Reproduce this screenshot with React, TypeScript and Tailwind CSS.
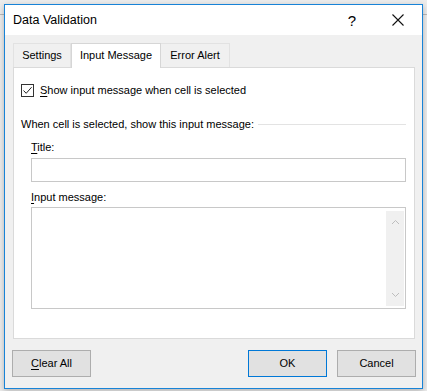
import React from "react";

const font = { fontFamily: '"Liberation Sans", Arial, sans-serif' };

function Chevron({ up }: { up?: boolean }) {
  return (
    <svg width="9" height="6" viewBox="0 0 9 6" className="block">
      <path
        d={up ? "M1 5 L4.5 1.5 L8 5" : "M1 1 L4.5 4.5 L8 1"}
        fill="none"
        stroke="#bdbdbd"
        strokeWidth="1"
      />
    </svg>
  );
}

export default function App() {
  return (
    <div className="relative w-[427px] h-[391px] bg-[#ececec] overflow-hidden" style={font}>
      <div className="absolute left-0 right-0 top-[14px] h-px bg-[#b9b9b9]" />
      <div className="relative z-10 ml-[4px] mt-[4px] w-[419px] h-[385px] border border-[#1883d7] bg-[#f0f0f0] flex flex-col shadow-[0_2px_6px_rgba(0,0,0,0.25)]">
        {/* Title bar */}
        <div className="h-[30px] bg-white flex items-center pl-[8px] text-black">
          <span className="text-[12.5px] leading-none">Data Validation</span>
          <span className="ml-auto mr-[36px] text-[15px] leading-none">?</span>
          <svg width="12" height="12" viewBox="0 0 12 12" className="mr-[18px]">
            <path d="M0.5 0.5 L11.5 11.5 M11.5 0.5 L0.5 11.5" stroke="#111" strokeWidth="1.1" />
          </svg>
        </div>

        {/* Tabs */}
        <div className="ml-[8px] mt-[8px] flex h-[24px] text-[11px] text-black">
          <div className="w-[58px] h-[24px] border border-b-0 border-[#e2e2e2] bg-[#f0f0f0] flex items-center justify-center">
            Settings
          </div>
          <div className="relative z-10 w-[90px] h-[25px] border border-b-0 border-[#d6d6d6] bg-white flex items-center justify-center pb-[1px]">
            Input Message
          </div>
          <div className="w-[69px] h-[24px] border border-b-0 border-l-0 border-[#e2e2e2] bg-[#f0f0f0] flex items-center justify-center">
            Error Alert
          </div>
        </div>

        {/* Panel */}
        <div className="ml-[8px] w-[402px] h-[272px] border border-[#dadada] bg-white flex flex-col text-[11px] text-black">
          <div className="mt-[16px] ml-[7px] flex items-center h-[13px]">
            <div className="w-[13px] h-[13px] border border-[#333] bg-white flex items-center justify-center">
              <svg width="11" height="11" viewBox="0 0 11 11">
                <path d="M1.5 5.5 L4.2 8.3 L9.6 2.2" fill="none" stroke="#222" strokeWidth="1" />
              </svg>
            </div>
            <span className="ml-[6px] leading-[13px]">
              <span className="underline underline-offset-2">S</span>how input message when cell is selected
            </span>
          </div>

          <div className="mt-[20px] ml-[7px] mr-[8px] flex items-center h-[14px]">
            <span className="leading-[14px] whitespace-nowrap">When cell is selected, show this input message:</span>
            <div className="ml-[4px] flex-1 h-px bg-[#e3e3e3]" />
          </div>

          <div className="mt-[9px] ml-[17px] leading-[14px] h-[14px]">
            <span className="underline underline-offset-2">T</span>itle:
          </div>
          <div className="mt-[4px] ml-[17px] w-[375px] h-[24px] border border-[#c8c8c8] bg-white" />

          <div className="mt-[8px] ml-[17px] leading-[14px] h-[14px]">
            <span className="underline underline-offset-2">I</span>nput message:
          </div>
          <div className="relative mt-[3px] ml-[17px] w-[375px] h-[102px] border border-[#c8c8c8] bg-white">
            <div className="absolute right-[1px] top-[3px] bottom-[2px] w-[18px] bg-[#f0f0f0] flex flex-col items-center justify-between py-[8px]">
              <Chevron up />
              <Chevron />
            </div>
          </div>
        </div>

        {/* Buttons */}
        <div className="mt-[11px] pl-[7px] pr-[6px] flex text-[11px] text-black">
          <button className="w-[79px] h-[27px] border border-[#adadad] bg-[#e1e1e1] flex items-center justify-center">
            <span>
              <span className="underline underline-offset-2">C</span>lear All
            </span>
          </button>
          <button className="ml-auto w-[79px] h-[27px] border border-[#0078d7] bg-[#e1e1e1] flex items-center justify-center">
            OK
          </button>
          <button className="ml-[10px] w-[79px] h-[27px] border border-[#adadad] bg-[#e1e1e1] flex items-center justify-center">
            Cancel
          </button>
        </div>
      </div>
    </div>
  );
}
